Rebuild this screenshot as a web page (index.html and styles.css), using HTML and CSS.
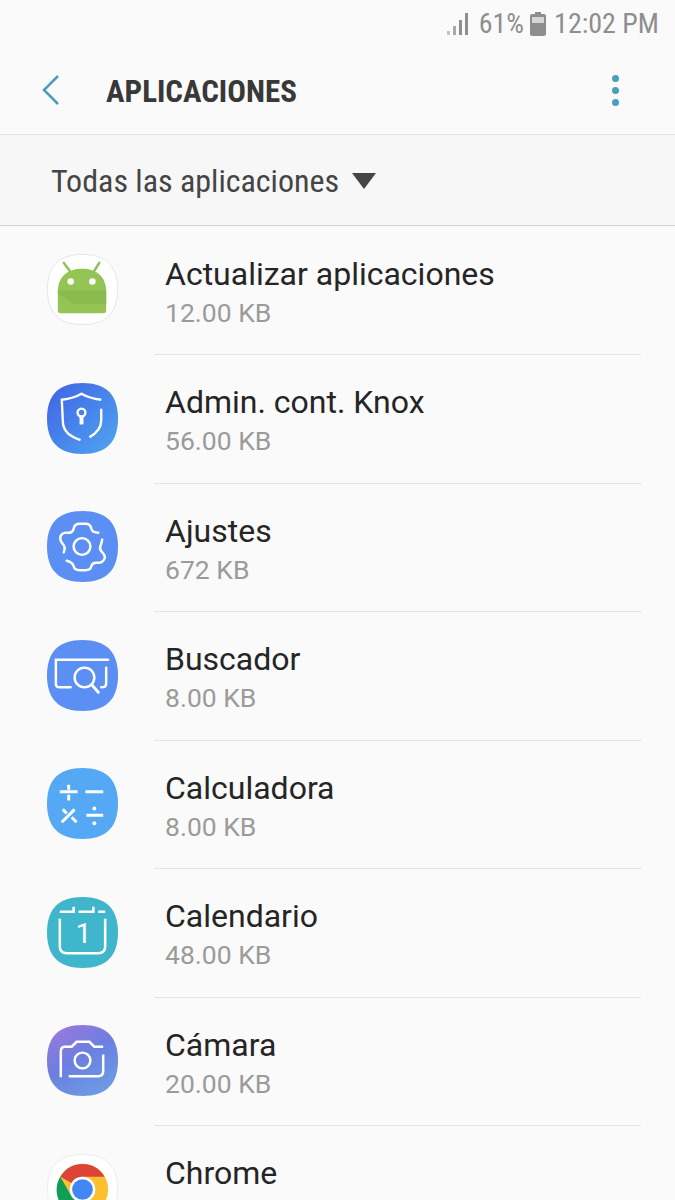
FILE: index.html
```html
<!DOCTYPE html>
<html lang="en">
<head>
  <meta charset="UTF-8">
  <title>Aplicaciones</title>
  <link rel="stylesheet" href="styles.css">
</head>
<body>

  <div class="status-bar">
    <svg class="signal" viewBox="0 0 24 24" width="24" height="24">
      <rect x="0" y="19" width="3" height="4" fill="#c4c4c4"/>
      <rect x="6" y="14" width="3" height="9" fill="#a8a8a8"/>
      <rect x="12" y="8" width="3" height="15"/>
      <rect x="18" y="1" width="3" height="22"/>
    </svg>
    <span class="pct">61%</span>
    <svg class="battery" viewBox="0 0 16 24" width="16" height="24">
      <path d="M5 0h6v2h3a2 2 0 0 1 2 2v18a2 2 0 0 1-2 2H2a2 2 0 0 1-2-2V4a2 2 0 0 1 2-2h3z" fill="#8e8e8e"/>
      <rect x="2" y="5" width="12" height="6" fill="#d6d6d6"/>
    </svg>
    <span class="time">12:02 PM</span>
  </div>

  <header class="app-bar">
    <svg class="back" viewBox="0 0 20 32" width="20" height="32">
      <path d="M17 2 L3 16 L17 30" fill="none" stroke="#4a9dbd" stroke-width="2.5"/>
    </svg>
    <h1 class="title">APLICACIONES</h1>
    <div class="more"><i></i><i></i><i></i></div>
  </header>

  <div class="filter">
    <span class="filter-label">Todas las aplicaciones</span>
    <span class="caret"></span>
  </div>

  <ul class="app-list">
    <li class="app">
      <svg class="icon" viewBox="0 0 72 72">
        <path d="M36 .5C60 .5 71.500 12 71.500 36S60 71.500 36 71.500.5 60 .5 36 12 .5 36 .5Z" fill="#fff" stroke="#e6e6e6"/>
        <path d="M17 9l6 8M53 9l-5 8" stroke="#8fc153" stroke-width="2.500" stroke-linecap="round"/>
        <path d="M11 38C11 23 21 15 35.500 15S60 23 60 38V57a3 3 0 0 1-3 3H14a3 3 0 0 1-3-3Z" fill="#94c454"/>
        <path d="M11 37H60V51H27L11 40Z" fill="#8aba4e"/>
        <circle cx="24" cy="28" r="3.300" fill="#fff"/>
        <circle cx="46" cy="28" r="3.300" fill="#fff"/>
      </svg>
      <div class="info">
        <div class="name">Actualizar aplicaciones</div>
        <div class="size">12.00 KB</div>
      </div>
    </li>
    <li class="app">
      <svg class="icon" viewBox="0 0 72 72">
        <defs>
          <linearGradient id="knox" x1="0" y1="0" x2="1" y2="1">
            <stop offset="0.1" stop-color="#4169e6"/>
            <stop offset="1" stop-color="#4fa6f0"/>
          </linearGradient>
        </defs>
        <path d="M36 0C60 0 72 12 72 36S60 72 36 72 0 60 0 36 12 0 36 0Z" fill="url(#knox)"/>
        <g fill="none" stroke="#fff" stroke-width="2.400">
          <path d="M34 58C24 54 16 50 16 38L15 17C24 16 30 14 35 11C40 14 46 16 55 17M55 26V38C55 46 50 51 43 55"/>
          <circle cx="35" cy="30" r="4"/>
          <path d="M35 34V42" stroke-width="4"/>
        </g>
      </svg>
      <div class="info">
        <div class="name">Admin. cont. Knox</div>
        <div class="size">56.00 KB</div>
      </div>
    </li>
    <li class="app">
      <svg class="icon" viewBox="0 0 72 72">
        <path d="M36 0C60 0 72 12 72 36S60 72 36 72 0 60 0 36 12 0 36 0Z" fill="#5b8ff3"/>
        <g fill="none" stroke="#fff" stroke-width="2.500" stroke-linecap="round">
          <path d="M17 42Q19 37 16.500 34Q12 29 14 25Q16 21.500 21 22Q26 22.500 27 18Q28 13 33 13H39Q44 13 45 18Q46 22 52 22"/>
          <path d="M56 29Q55 34 54 36Q53 39 56 42Q60 46 58 49Q56 53 51 52.500Q46 52 45 56Q44 60 39 60H33Q28 60 27 56Q26 52 20 50.500"/>
          <circle cx="35.500" cy="36" r="8.500"/>
        </g>
      </svg>
      <div class="info">
        <div class="name">Ajustes</div>
        <div class="size">672 KB</div>
      </div>
    </li>
    <li class="app">
      <svg class="icon" viewBox="0 0 72 72">
        <path d="M36 0C60 0 72 12 72 36S60 72 36 72 0 60 0 36 12 0 36 0Z" fill="#5b8ff3"/>
        <g fill="none" stroke="#fff" stroke-width="2.500" stroke-linecap="round">
          <path d="M62 20H9V44Q9 48 13 48H24"/>
          <path d="M60 28V44Q60 48 55 48"/>
          <circle cx="38" cy="38" r="10"/>
          <path d="M45.500 45.500L52 53" stroke-width="3"/>
        </g>
      </svg>
      <div class="info">
        <div class="name">Buscador</div>
        <div class="size">8.00 KB</div>
      </div>
    </li>
    <li class="app">
      <svg class="icon" viewBox="0 0 72 72">
        <path d="M36 0C60 0 72 12 72 36S60 72 36 72 0 60 0 36 12 0 36 0Z" fill="#55a8f3"/>
        <g fill="none" stroke="#fff" stroke-width="3">
          <path d="M13 24H31M22 17V22M22 27V33M39 24H57M40 48H57M15 55L28 42M16 42L20 46M25 50L30 55"/>
        </g>
        <circle cx="48" cy="41" r="2" fill="#fff"/>
        <circle cx="48" cy="56" r="2" fill="#fff"/>
      </svg>
      <div class="info">
        <div class="name">Calculadora</div>
        <div class="size">8.00 KB</div>
      </div>
    </li>
    <li class="app">
      <svg class="icon" viewBox="0 0 72 72">
        <path d="M36 0C60 0 72 12 72 36S60 72 36 72 0 60 0 36 12 0 36 0Z" fill="#3fb6cb"/>
        <g fill="none" stroke="#fff" stroke-width="2.600">
          <path d="M13 15H27V10M32 15H47V10M52 15H59"/>
          <path d="M13 22V50Q13 57 20 57H52Q59 57 59 50V22"/>
        </g>
        <text class="cal-day" x="37" y="47" text-anchor="middle">1</text>
      </svg>
      <div class="info">
        <div class="name">Calendario</div>
        <div class="size">48.00 KB</div>
      </div>
    </li>
    <li class="app">
      <svg class="icon" viewBox="0 0 72 72">
        <defs>
          <linearGradient id="cam" x1="0.2" y1="0" x2="0.8" y2="1">
            <stop offset="0" stop-color="#9a78dc"/>
            <stop offset="0.45" stop-color="#6b7fe0"/>
            <stop offset="1" stop-color="#6d9ee4"/>
          </linearGradient>
        </defs>
        <path d="M36 0C60 0 72 12 72 36S60 72 36 72 0 60 0 36 12 0 36 0Z" fill="url(#cam)"/>
        <g fill="none" stroke="#fff" stroke-width="2.500">
          <path d="M14 53V27Q14 22 18 22H25L30 17H43L48 22H57"/>
          <path d="M57 30V47Q57 52 52 52H22"/>
          <circle cx="36" cy="36" r="8"/>
        </g>
      </svg>
      <div class="info">
        <div class="name">Cámara</div>
        <div class="size">20.00 KB</div>
      </div>
    </li>
    <li class="app">
      <svg class="icon" viewBox="0 0 72 72">
        <path d="M36 .5C60 .5 71.500 12 71.500 36S60 71.500 36 71.500.5 60 .5 36 12 .5 36 .5Z" fill="#fff" stroke="#ececec"/>
        <circle cx="36" cy="36" r="26" fill="#fbc02d"/>
        <path d="M13.500 23A26 26 0 0 1 58.500 23H36A13 13 0 0 0 24.700 29.500Z" fill="#db4437"/>
        <path d="M13.500 23L24.700 42.500A13 13 0 0 0 42.500 47.300L31 62A26 26 0 0 1 13.500 23Z" fill="#0f9d58"/>
        <circle cx="36" cy="36" r="13" fill="#fff"/>
        <circle cx="36" cy="36" r="10.500" fill="#4285f4"/>
      </svg>
      <div class="info">
        <div class="name">Chrome</div>
      </div>
    </li>
  </ul>

</body>
</html>
```

FILE: styles.css
```css
html, body {
  height: 1200px;
  overflow: hidden;
}

body {
  margin: 0;
  font-family: Roboto, sans-serif;
  background-color: #fafafa;
  color: #252525;
}

.status-bar {
  height: 46px;
  padding-right: 16px;
  box-sizing: border-box;
  padding-top: 1px;
  display: flex;
  align-items: center;
  justify-content: flex-end;
  color: #8e8e8e;
  font-size: 28px;
  font-stretch: 75%;
  fill: #8e8e8e;
}

.signal {
  margin-right: 8px;
}

.pct {
  margin-right: 6px;
}

.battery {
  margin-right: 8px;
}

.app-bar {
  height: 88px;
  display: flex;
  align-items: center;
  border-bottom: 1px solid #e4e4e4;
}

.back {
  margin-left: 41px;
}

.title {
  margin: 2px 0 0 45px;
  font-size: 31px;
  font-weight: 700;
  font-stretch: 75%;
  color: #383838;
}

.more {
  margin-left: auto;
  margin-right: 56px;
  display: flex;
  flex-direction: column;
  gap: 5px;
}

.more i {
  display: block;
  width: 7px;
  height: 7px;
  border-radius: 50%;
  background-color: #4a9dbd;
}

.filter {
  height: 91px;
  padding: 2px 0 0 51px;
  display: flex;
  align-items: center;
  background-color: #f7f7f7;
  border-bottom: 1px solid #d2d2d2;
  box-sizing: border-box;
  color: #454545;
  font-size: 32px;
  font-stretch: 75%;
}

.caret {
  margin-left: 13px;
  border-left: 12px solid transparent;
  border-right: 12px solid transparent;
  border-top: 16px solid #454545;
}

.app-list {
  margin: 0.5px 0 0;
  padding: 0;
  list-style: none;
}

.app {
  height: 128.5px;
  box-sizing: border-box;
  padding-left: 47px;
  display: flex;
  align-items: flex-start;
}

.icon {
  width: 71px;
  height: 71px;
  flex: none;
  margin-top: 27.5px;
}

.info {
  flex: none;
  width: 487px;
  height: 128.5px;
  box-sizing: border-box;
  margin-left: 36px;
  padding: 27.4px 0 0 11px;
  border-bottom: 1px solid #e4e4e4;
}

.name {
  font-size: 32px;
  line-height: 40px;
}

.size {
  margin-top: 1px;
  font-size: 26.5px;
  line-height: 36px;
  color: #9b9b9b;
}

.cal-day {
  font-family: Roboto, sans-serif;
  font-size: 28px;
  fill: #fff;
}
```
